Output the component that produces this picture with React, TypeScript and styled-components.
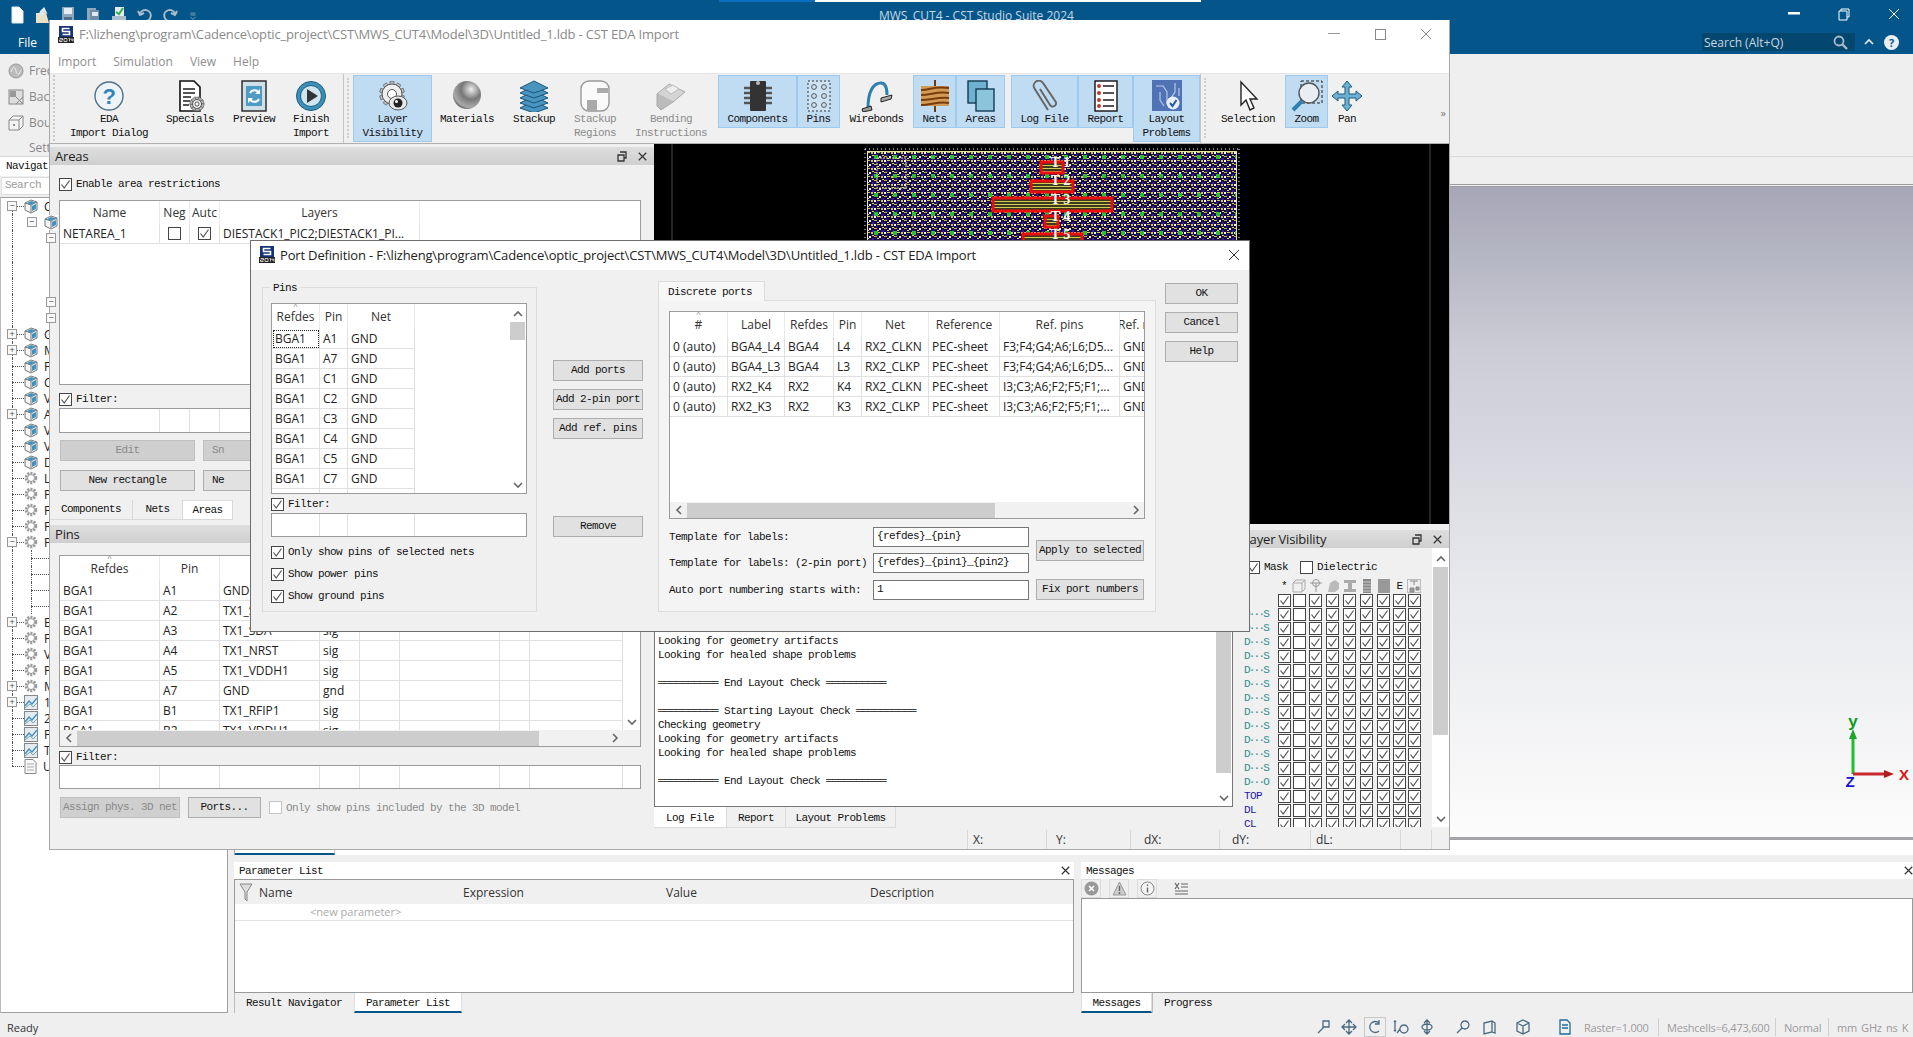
import React from 'react';
import styled, { createGlobalStyle, css } from 'styled-components';

const GlobalStyle = createGlobalStyle`
  html, body { margin: 0; padding: 0; width: 1913px; height: 1037px; overflow: hidden; background: #f0eff0; }
  * { box-sizing: border-box; }
`;

const UI = `"Open Sans", "Noto Sans", sans-serif`;
const mono = css`
  font-family: "Liberation Mono", monospace;
  font-size: 11px;
  letter-spacing: -0.6px;
  white-space: pre;
`;

/* ---------- frame ---------- */
const Desktop = styled.div`
  position: relative;
  width: 1913px;
  height: 1037px;
  overflow: hidden;
  display: flex;
  flex-direction: column;
  background: #f0eff0;
  font-family: ${UI};
  font-size: 12px;
  color: #222;
`;
const AppTitle = styled.header`
  height: 54px;
  flex: none;
  background: #04568a;
  display: flex;
  flex-direction: column;
  color: #fff;
`;
const ShareBar = styled.div`
  position: absolute;
  left: 719px;
  top: 0;
  width: 482px;
  height: 2px;
  background: linear-gradient(90deg, #0a6fc2 0 96px, #fff 96px);
`;
const QuickRow = styled.div`
  height: 30px;
  display: flex;
  align-items: flex-start;
`;
const QuickIcons = styled.div`
  width: 879px;
  padding: 6px 0 0 9px;
  display: flex;
  gap: 9.5px;
`;
const AppName = styled.div`
  font-size: 12px;
  line-height: 16px;
  margin-top: 8px;
  color: #c6d6e2;
  width: 206px;
  white-space: nowrap;
`;
const WinControls = styled.div`
  margin-left: auto;
  margin-right: -6px;
  display: flex;
`;
const WinControl = styled.div`
  width: 50px;
  height: 28px;
  display: flex;
  align-items: center;
  justify-content: center;
`;
const FileRow = styled.div`
  height: 24px;
  display: flex;
  align-items: center;
  padding-left: 18px;
`;
const FileLabel = styled.div`
  font-size: 12px;
  color: #fff;
`;
const SearchWrap = styled.div`
  margin-left: auto;
  width: 153px;
  height: 18px;
  margin-right: 6px;
  background: #03476f;
  display: flex;
  align-items: center;
  justify-content: space-between;
  padding: 0 7px 0 2px;
  color: #c8d6e0;
  font-size: 12px;
  white-space: nowrap;
`;
const HelpWrap = styled.div`
  width: 52px;
  display: flex;
  align-items: center;
  gap: 10px;
  padding-left: 3px;
`;
const HelpDot = styled.div`
  width: 15px;
  height: 15px;
  border-radius: 50%;
  background: #e8eef2;
  color: #04568a;
  font-weight: 700;
  font-size: 11px;
  line-height: 15px;
  text-align: center;
`;
const AppRibbon = styled.div`
  height: 103px;
  flex: none;
  border-bottom: 1px solid #d9d8d9;
  display: flex;
  flex-direction: column;
  padding: 8px 0 0 8px;
  gap: 9px;
  color: #888;
`;
const RibbonEntry = styled.div`
  height: 17px;
  display: flex;
  align-items: center;
  gap: 5px;
`;
const RibbonGroupLabel = styled.div`
  height: 16px;
  padding-left: 21px;
  line-height: 16px;
`;
const Workspace = styled.div`
  height: 856px;
  flex: none;
  display: flex;
`;
const NavPanel = styled.aside`
  width: 228px;
  flex: none;
  display: flex;
  flex-direction: column;
`;
const NavTab = styled.div`
  ${mono};
  height: 19px;
  background: #fff;
  padding: 2px 0 0 6px;
  line-height: 14px;
  color: #111;
`;
const NavSearch = styled.div`
  ${mono};
  height: 18px;
  margin: 1px 0 0 1px;
  background: #fff;
  border: 1px solid #ddd;
  color: #999;
  padding-left: 3px;
  line-height: 15px;
`;
const TreeBox = styled.div`
  flex: 1;
  margin-top: 2px;
  padding-top: 0;
  background: #fff;
  border: 1px solid #a0a0a0;
  border-left: 1px solid #bbb;
  overflow: hidden;
`;
const TreeRow = styled.div<{ $guide: 'full' | 'first' | 'last'; $branch: boolean }>`
  position: relative;
  height: 16px;
  display: flex;
  align-items: center;
  padding-left: 6px;
  font-size: 12px;
  &::before {
    content: '';
    position: absolute;
    left: 11px;
    width: 0;
    border-left: 1px dotted #555;
    top: ${(p) => (p.$guide === 'first' ? '8px' : '0')};
    bottom: ${(p) => (p.$guide === 'last' ? '8px' : '0')};
  }
  &::after {
    content: '';
    position: absolute;
    display: ${(p) => (p.$branch ? 'block' : 'none')};
    left: 11px;
    width: 12px;
    top: 8px;
    border-top: 1px dotted #555;
  }
`;
const Expander = styled.span<{ $level: number }>`
  position: relative;
  z-index: 1;
  width: 10px;
  height: 10px;
  flex: none;
  margin-left: ${(p) => p.$level * 19.5}px;
  background: #f8f8f8;
  border: 1px solid #999;
  font-size: 9px;
  line-height: 8px;
  text-align: center;
  color: #444;
`;
const ExpanderGap = styled.span`
  width: 10px;
  flex: none;
`;
const TreeIcon = styled.span`
  position: relative;
  z-index: 1;
  margin-left: 7px;
  background: #fff;
  display: flex;
  flex: none;
`;
const TreeLabel = styled.span`
  margin-left: 6px;
`;
const SubBranch = styled.div`
  position: relative;
  height: 16px;
  &::before {
    content: '';
    position: absolute;
    left: 24px;
    top: 0;
    bottom: 0;
    border-left: 1px dotted #555;
  }
  &::after {
    content: '';
    position: absolute;
    left: 24px;
    top: 8px;
    width: 20px;
    border-top: 1px dotted #555;
  }
`;
const MainArea = styled.main`
  flex: 1;
  margin-left: 6px;
  display: flex;
  flex-direction: column;
`;
const SubBar = styled.div`
  height: 30px;
  flex: none;
  border-bottom: 3px double #9c9c9c;
`;
const Viewport = styled.div`
  position: relative;
  height: 653px;
  flex: none;
  background: linear-gradient(180deg, #a6a6b7 0%, #cbccd5 25%, #e7e8ec 60%, #fcfcfc 100%);
  border-bottom: 3px double #a0a0a0;
`;
const AxisArt = styled.svg<{ $left: number; $top: number }>`
  position: absolute;
  left: ${(p) => p.$left}px;
  top: ${(p) => p.$top}px;
`;
const TabStrip = styled.div`
  height: 15px;
  flex: none;
  background: #fff;
  border-left: 1px solid #aaa;
`;
const StripTab = styled.div`
  width: 100px;
  height: 15px;
  background: #fff;
  border-right: 1px solid #ccc;
  border-bottom: 2px solid #04568a;
`;
const Docks = styled.div`
  margin-top: 7px;
  height: 151px;
  flex: none;
  display: flex;
  gap: 7px;
`;
const Dock = styled.section<{ $w?: number }>`
  width: ${(p) => (p.$w ? `${p.$w}px` : 'auto')};
  flex: ${(p) => (p.$w ? 'none' : '1')};
  display: flex;
  flex-direction: column;
`;
const DockTitle = styled.div<{ $edge?: boolean }>`
  ${mono};
  height: 17px;
  background: #fff;
  display: flex;
  align-items: center;
  justify-content: space-between;
  padding: 0 ${(p) => (p.$edge ? 0 : 4)}px 0 5px;
  color: #111;
`;
const DockBox = styled.div`
  flex: 1;
  background: #fff;
  border: 1px solid #999;
`;
const ParamHead = styled.div`
  height: 24px;
  background: #f1f0f1;
  display: grid;
  grid-template-columns: 24px 204px 203px 204px 1fr;
  align-items: center;
  font-size: 12px;
  color: #333;
`;
const FilterSlot = styled.div`
  display: flex;
  padding-left: 4px;
`;
const ParamNew = styled.div`
  height: 17px;
  border-bottom: 1px solid #e2e2e2;
  padding-left: 75px;
  font-size: 11px;
  line-height: 16px;
  color: #aaa;
`;
const MsgTools = styled.div`
  height: 19px;
  display: flex;
  align-items: center;
  background: #f0eff0;
  padding-left: 0;
  gap: 8px;
`;
const MsgTool = styled.div`
  width: 20px;
  height: 19px;
  display: flex;
  align-items: center;
  justify-content: center;
  border: 1px solid #ddd;
`;
const MsgToolPlain = styled(MsgTool)`
  border: none;
  margin-left: 6px;
`;
const DockTabs = styled.div`
  height: 20px;
  flex: none;
  display: flex;
`;
const DockTab = styled.div<{ $w: number; $active?: boolean }>`
  ${mono};
  width: ${(p) => p.$w}px;
  text-align: center;
  line-height: 21px;
  color: #111;
  background: ${(p) => (p.$active ? '#fff' : 'transparent')};
  border-bottom: ${(p) => (p.$active ? '2px solid #04568a' : 'none')};
  border-left: 1px solid ${(p) => (p.$active ? '#ddd' : '#bbb')};
  border-right: 1px solid ${(p) => (p.$active ? '#ddd' : 'transparent')};
`;
const StatusBar = styled.footer`
  height: 24px;
  flex: none;
  display: flex;
  align-items: center;
  padding: 4px 3px 0 7px;
  color: #333;
  font-size: 11px;
`;
const StatusTools = styled.div`
  margin-left: auto;
  display: flex;
  align-items: center;
  gap: 4px;
`;
const StatusIcon = styled.div<{ $boxed?: boolean; $gap?: number }>`
  width: 22px;
  height: 20px;
  display: flex;
  align-items: center;
  justify-content: center;
  margin-left: ${(p) => p.$gap ?? 0}px;
  border: 1px solid ${(p) => (p.$boxed ? '#c8c8c8' : 'transparent')};
`;
const StatusText = styled.div<{ $w: number }>`
  width: ${(p) => p.$w}px;
  margin-left: 8px;
  color: #9a9a9a;
  white-space: nowrap;
  letter-spacing: -0.2px;
  word-spacing: 1.5px;
`;
const StatusSep = styled.div`
  width: 1px;
  height: 18px;
  background: #d0d0d0;
  margin-left: 8px;
`;

/* ---------- EDA window ---------- */
const EdaWindow = styled.div`
  position: absolute;
  left: 49px;
  top: 20px;
  width: 1401px;
  height: 830px;
  background: #f0f0f0;
  border: 1px solid #a8a8a8;
  border-top: none;
  display: flex;
  flex-direction: column;
`;
const WinTitle = styled.div`
  height: 30px;
  flex: none;
  background: #fff;
  display: flex;
  align-items: center;
  padding: 0 0 2px 8px;
  gap: 5px;
`;
const WinTitleText = styled.div<{ $dark?: boolean }>`
  color: ${(p) => (p.$dark ? '#222' : '#8a8a8a')};
  font-size: 13px;
  white-space: nowrap;
  letter-spacing: -0.17px;
`;
const EdaControls = styled.div`
  margin-left: auto;
  display: flex;
`;
const EdaControl = styled.div<{ $w?: number }>`
  width: ${(p) => p.$w ?? 46}px;
  height: 28px;
  display: flex;
  align-items: center;
  justify-content: center;
`;
const MenuBar = styled.div`
  height: 23px;
  flex: none;
  background: #fff;
  display: flex;
  gap: 17px;
  padding: 3px 0 0 8px;
  color: #8e8e8e;
  align-items: flex-start;
  line-height: 18px;
`;
const Toolbar = styled.div`
  height: 71px;
  flex: none;
  background: #f0f0f0;
  border-top: 1px solid #e6e6e6;
  border-bottom: 1px solid #b0b0b0;
  display: flex;
  align-items: flex-start;
  padding: 1px 0 0 3px;
`;
const Grip = styled.div<{ $w: number }>`
  width: ${(p) => p.$w}px;
  flex: none;
  height: 66px;
  border-left: 2px dotted #c8c8c8;
`;
const ToolSep = styled.div<{ $w: number }>`
  width: ${(p) => p.$w}px;
  height: 69px;
  margin-top: -1px;
  flex: none;
  border-left: 1px solid #c4c4c4;
  padding-left: 3px;
  &::before {
    content: '';
    display: block;
    height: 60px;
    margin-top: 4px;
    border-left: 2px dotted #cfcfcf;
  }
`;
const Tool = styled.div<{ $w: number; $active?: boolean; $off?: boolean }>`
  ${mono};
  width: ${(p) => p.$w}px;
  flex: none;
  padding-top: 3px;
  border: 1px solid ${(p) => (p.$active ? '#9ccbef' : 'transparent')};
  background: ${(p) => (p.$active ? '#c0dcf3' : 'transparent')};
  color: ${(p) => (p.$off ? '#8c8c8c' : '#111')};
  display: flex;
  flex-direction: column;
  align-items: center;
  line-height: 14px;
  padding-bottom: 1px;
`;
const ToolIcon = styled.div`
  height: 33px;
  display: flex;
  align-items: center;
  justify-content: center;
`;
const ToolGap = styled.div<{ $w: number }>`
  width: ${(p) => p.$w}px;
  flex: none;
`;
const ToolMore = styled.div`
  margin: 30px 0 0 auto;
  padding-right: 3px;
  font-size: 11px;
  color: #777;
`;
const EdaBody = styled.div`
  height: 686px;
  flex: none;
  display: flex;
`;
const LeftCol = styled.div`
  width: 604px;
  flex: none;
  display: flex;
  flex-direction: column;
`;
const PanelTitle = styled.div<{ $mt: number }>`
  height: 18px;
  flex: none;
  margin-top: ${(p) => p.$mt}px;
  padding: 0 7px 0 5px;
  background: linear-gradient(180deg, #dedede, #cfcfcf);
  display: flex;
  align-items: center;
  justify-content: space-between;
  color: #222;
  font-size: 13px;
  letter-spacing: -0.17px;
`;
const PanelIcons = styled.div`
  display: flex;
  gap: 11px;
  align-items: center;
`;
const PanelBody = styled.div`
  padding: 0 13px 0 9px;
  display: flex;
  flex-direction: column;
`;
const CheckRow = styled.label<{ $mt?: number }>`
  ${mono};
  height: 14px;
  flex: none;
  display: flex;
  align-items: center;
  gap: 4px;
  margin-top: ${(p) => p.$mt ?? 0}px;
  color: #111;
  line-height: 14px;
`;
const CheckRowMuted = styled(CheckRow)`
  color: #8a8a8a;
`;
const CheckBox = styled.span<{ $off?: boolean }>`
  width: 13px;
  height: 13px;
  flex: none;
  border: 1px solid ${(p) => (p.$off ? '#c4c4c4' : '#444')};
  background: #fff;
  display: inline-flex;
  align-items: center;
  justify-content: center;
`;
const Frame = styled.div<{ $h: number; $mt?: number }>`
  height: ${(p) => p.$h}px;
  margin-top: ${(p) => p.$mt ?? 0}px;
  flex: none;
  background: #fff;
  border: 1px solid #9c9c9c;
  display: flex;
  flex-direction: column;
  overflow: hidden;
`;
const FrameMain = styled.div`
  flex: 1;
  min-height: 0;
  display: flex;
  overflow: hidden;
`;
const Sheet = styled.div<{ $cols: string; $head: number }>`
  display: grid;
  grid-template-columns: ${(p) => p.$cols};
  grid-template-rows: ${(p) => p.$head}px;
  grid-auto-rows: 20px;
  flex: 1;
  min-width: 0;
  align-content: start;
  overflow: hidden;
`;
const HeadCell = styled.div`
  position: relative;
  display: flex;
  align-items: center;
  justify-content: center;
  border-right: 1px solid #eaeaea;
  color: #333;
  overflow: hidden;
  white-space: nowrap;
`;
const SortMark = styled.span`
  position: absolute;
  top: -2px;
  left: 0;
  right: 0;
  text-align: center;
  font-size: 8px;
  line-height: 8px;
  color: #888;
`;
const Cell = styled.div<{ $focus?: boolean }>`
  padding: 0 3px;
  line-height: 19px;
  border-right: 1px solid #e0e0e0;
  border-bottom: 1px solid #e0e0e0;
  overflow: hidden;
  white-space: nowrap;
  color: #222;
  outline: ${(p) => (p.$focus ? '1px dotted #222' : 'none')};
  outline-offset: -2px;
`;
const CheckCell = styled(Cell)`
  display: flex;
  align-items: center;
  justify-content: center;
`;
const VScroll = styled.div`
  width: 17px;
  flex: none;
  background: #fff;
  display: flex;
  flex-direction: column;
  align-items: center;
`;
const ScrollEnd = styled.div<{ $mt?: number }>`
  height: 16px;
  width: 100%;
  flex: none;
  margin-top: ${(p) => p.$mt ?? 0}px;
  display: flex;
  align-items: center;
  justify-content: center;
`;
const ScrollEndBottom = styled(ScrollEnd)`
  margin-top: auto;
`;
const VThumb = styled.div<{ $h: number }>`
  width: 15px;
  height: ${(p) => p.$h}px;
  flex: none;
  background: #cdcdcd;
`;
const HScroll = styled.div`
  height: 16px;
  flex: none;
  background: #f1f1f1;
  display: flex;
  align-items: center;
`;
const HEnd = styled.div`
  width: 17px;
  height: 16px;
  flex: none;
  display: flex;
  align-items: center;
  justify-content: center;
`;
const HEndRight = styled(HEnd)<{ $inset?: number }>`
  margin-left: auto;
  margin-right: ${(p) => p.$inset ?? 0}px;
`;
const HThumb = styled.div<{ $w: number }>`
  width: ${(p) => p.$w}px;
  height: 15px;
  flex: none;
  background: #cdcdcd;
`;
const FilterInput = styled.div<{ $cols: string; $h: number; $mt: number }>`
  height: ${(p) => p.$h}px;
  margin-top: ${(p) => p.$mt}px;
  flex: none;
  display: grid;
  grid-template-columns: ${(p) => p.$cols};
  background: #fff;
  border: 1px solid #9a9a9a;
`;
const FilterCol = styled.div`
  border-right: 1px solid #e0e0e0;
`;
const BtnRow = styled.div<{ $mt: number }>`
  display: flex;
  gap: 8px;
  margin-top: ${(p) => p.$mt}px;
  padding-left: 1px;
  align-items: center;
`;
const Btn = styled.div<{ $w?: number; $off?: boolean; $left?: boolean }>`
  ${mono};
  width: ${(p) => (p.$w ? `${p.$w}px` : '100%')};
  height: 21px;
  flex: none;
  line-height: 19px;
  text-align: ${(p) => (p.$left ? 'left' : 'center')};
  padding-left: ${(p) => (p.$left ? '8px' : '0')};
  background: ${(p) => (p.$off ? '#cfcfcf' : '#e1e1e1')};
  color: ${(p) => (p.$off ? '#8a8a8a' : '#111')};
  border: 1px solid ${(p) => (p.$off ? '#bfbfbf' : '#adadad')};
  overflow: hidden;
`;
const PanelTabs = styled.div`
  margin: 9px 0 0 -9px;
  height: 20px;
  display: flex;
`;
const PanelTab = styled.div<{ $w: number; $active?: boolean }>`
  ${mono};
  width: ${(p) => p.$w}px;
  text-align: center;
  line-height: 19px;
  color: #111;
  background: ${(p) => (p.$active ? '#fff' : '#f0f0f0')};
  border-top: ${(p) => (p.$active ? '1px solid #ddd' : 'none')};
  border-right: 1px solid #d8d8d8;
  border-bottom: 1px solid #d8d8d8;
`;
const RightCol = styled.div`
  flex: 1;
  display: flex;
  flex-direction: column;
`;
const Canvas = styled.div`
  height: 380px;
  flex: none;
  background: #000;
  overflow: hidden;
`;
const LowerRow = styled.div`
  margin-top: 5px;
  height: 301px;
  flex: none;
  display: flex;
`;
const LogCol = styled.div`
  width: 579px;
  flex: none;
  display: flex;
  flex-direction: column;
`;
const LogBox = styled.div`
  height: 278px;
  flex: none;
  background: #fff;
  border: 1px solid #777;
  display: flex;
`;
const LogText = styled.div`
  flex: 1;
  display: flex;
  flex-direction: column;
  justify-content: flex-end;
  padding: 0 0 18px 3px;
`;
const LogLine = styled.div`
  ${mono};
  height: 14px;
  line-height: 14px;
  color: #111;
`;
const LogThumbSpace = styled.div`
  height: 100px;
  flex: none;
`;
const LogTabs = styled.div`
  height: 21px;
  display: flex;
`;
const LogTab = styled.div<{ $w: number; $active?: boolean }>`
  ${mono};
  width: ${(p) => p.$w}px;
  text-align: center;
  line-height: 22px;
  color: #111;
  background: ${(p) => (p.$active ? '#fff' : 'transparent')};
  border-right: 1px solid #dcdcdc;
  border-bottom: 1px solid #dcdcdc;
`;
const LayerPanel = styled.div`
  flex: 1;
  margin-left: 5px;
  padding-top: 1px;
  display: flex;
  flex-direction: column;
  min-width: 0;
`;
const LayerMain = styled.div`
  height: 279px;
  flex: none;
  display: flex;
  overflow: hidden;
`;
const LayerContent = styled.div`
  flex: 1;
  padding: 12px 0 0 6px;
  overflow: hidden;
`;
const MaskRow = styled.div`
  ${mono};
  height: 14px;
  padding-left: 3px;
  display: flex;
  align-items: center;
  gap: 4px;
  color: #111;
`;
const MaskSecond = styled.span`
  width: 4px;
`;
const LayerGrid = styled.div`
  margin-top: 5px;
  display: grid;
  grid-template-columns: 33px 14px 16px 17px 17px 17px 17px 17px 15px 14px;
  grid-auto-rows: 14px;
  justify-items: center;
  align-items: center;
`;
const LayerLabel = styled.div<{ $color: string; $wide?: boolean }>`
  ${mono};
  justify-self: start;
  color: ${(p) => p.$color};
  line-height: 14px;
  letter-spacing: ${(p) => (p.$wide ? '-1.8px' : '-0.6px')};
`;
const LayerHead = styled.div`
  ${mono};
  display: flex;
  align-items: center;
  justify-content: center;
  width: 100%;
  height: 14px;
  color: #111;
`;
const CoordBar = styled.div`
  height: 19px;
  flex: none;
  display: flex;
  justify-content: flex-end;
  align-items: stretch;
  font-size: 12px;
  color: #333;
`;
const CoordCell = styled.div<{ $w: number; $pad: number }>`
  width: ${(p) => p.$w}px;
  padding-left: ${(p) => p.$pad}px;
  border-left: 1px solid #d8d8d8;
  line-height: 19px;
`;

/* ---------- dialog ---------- */
const Dialog = styled.div`
  position: absolute;
  left: 250px;
  top: 240px;
  width: 1000px;
  height: 392px;
  background: #f0f0f0;
  border: 1px solid #6e6e6e;
  display: flex;
  flex-direction: column;
`;
const DialogTitle = styled.div`
  height: 29px;
  flex: none;
  background: #fff;
  display: flex;
  align-items: center;
  padding: 0 0 2px 8px;
  gap: 5px;
`;
const DialogBody = styled.div`
  flex: 1;
  display: flex;
  align-items: flex-start;
  padding: 11px 0 0 11px;
`;
const GroupBox = styled.fieldset`
  position: relative;
  margin: 6px 0 0;
  padding: 15px 9px 0 8px;
  width: 275px;
  height: 325px;
  border: 1px solid #dcdcdc;
  display: flex;
  flex-direction: column;
  min-inline-size: 0;
`;
const GroupLegend = styled.div`
  ${mono};
  position: absolute;
  left: 7px;
  top: -7px;
  padding: 0 3px;
  background: #f0f0f0;
  line-height: 14px;
  color: #111;
`;
const MiddleCol = styled.div`
  width: 90px;
  margin: 79px 0 0 16px;
  flex: none;
  display: flex;
  flex-direction: column;
  gap: 8px;
`;
const RemoveSlot = styled.div`
  margin-top: 69px;
`;
const TabCol = styled.div`
  width: 498px;
  margin-left: 15px;
  flex: none;
`;
const PageTab = styled.div`
  ${mono};
  width: 107px;
  height: 20px;
  background: #f7f7f7;
  border: 1px solid #dcdcdc;
  border-bottom: none;
  padding: 3px 0 0 9px;
  line-height: 14px;
  color: #111;
  margin-bottom: -1px;
  position: relative;
`;
const TabPage = styled.div`
  height: 312px;
  background: #f4f4f4;
  border: 1px solid #dcdcdc;
  padding: 10px 10px 0 10px;
`;
const FormGrid = styled.div`
  margin-top: 8px;
  display: grid;
  grid-template-columns: 197px 156px 108px;
  column-gap: 7px;
  grid-template-rows: 20px 20px 21px;
  row-gap: 6px;
`;
const FormLabel = styled.div`
  ${mono};
  line-height: 20px;
  color: #111;
`;
const FormLabelLast = styled(FormLabel)`
  align-self: end;
`;
const FormInput = styled.div`
  ${mono};
  height: 20px;
  background: #fff;
  border: 1px solid #777;
  padding-left: 3px;
  line-height: 17px;
  color: #111;
`;
const FormInputLast = styled(FormInput)`
  align-self: end;
`;
const ApplyCell = styled.div`
  grid-column: 3;
  grid-row: 1 / span 2;
  align-self: center;
`;
const ActionCol = styled.div`
  width: 73px;
  margin: 2px 0 0 9px;
  flex: none;
  display: flex;
  flex-direction: column;
  gap: 8px;
`;

/* ---------- icons ---------- */
const X = ({ s = 12, c = '#555', w = 1 }: { s?: number; c?: string; w?: number }) => (
  <svg width={s} height={s} viewBox="0 0 12 12">
    <path d="M1 1L11 11M11 1L1 11" stroke={c} strokeWidth={w} />
  </svg>
);
const Float = () => (
  <svg width="10" height="11" viewBox="0 0 10 11">
    <path d="M3 1H9V7H7M1 4H7V10H1Z" fill="none" stroke="#333" strokeWidth="1.3" />
  </svg>
);
const Tick = ({ c = '#555' }: { c?: string }) => (
  <svg width="11" height="11" viewBox="0 0 11 11">
    <path d="M1.5 5.5L4.2 9L9.5 1.5" fill="none" stroke={c} strokeWidth="1.2" />
  </svg>
);
const Box = ({ on = true, off = false }: { on?: boolean; off?: boolean }) => (
  <CheckBox $off={off}>{on && <Tick />}</CheckBox>
);
const Chev = ({ d, c = '#666' }: { d: 'u' | 'd' | 'l' | 'r'; c?: string }) => {
  const p = { u: 'M1 7L5 3L9 7', d: 'M1 3L5 7L9 3', l: 'M7 1L3 5L7 9', r: 'M3 1L7 5L3 9' }[d];
  return (
    <svg width="10" height="10" viewBox="0 0 10 10">
      <path d={p} fill="none" stroke={c} strokeWidth="1.6" />
    </svg>
  );
};
const CstLogo = () => (
  <svg width="16" height="17" viewBox="0 0 16 17">
    <rect x="1" y="0" width="14" height="11" fill="#16337a" />
    <path d="M11.5 2.5H4.5V5.5H11.5V8.5H4.5" fill="none" stroke="#fff" strokeWidth="1.6" />
    <rect x="0" y="11" width="16" height="6" fill="#222" />
    <path d="M1.5 12.5h3v1.5h-3v1.5h3M6 12.5h3v3h-3zM10.5 12.5h1v3M13 12.5v1.5h2M15 12.5v3" fill="none" stroke="#eee" strokeWidth=".8" />
  </svg>
);
const Q = (kids: React.ReactNode, w = 16, h = 18) => (
  <svg width={w} height={h} viewBox="0 0 16 18">
    {kids}
  </svg>
);
const quickIcons = [
  Q(<path d="M3 1H10L14 5V17H3Z" fill="#fff" stroke="#dfe7ee" />),
  Q(<><path d="M1 7H11L14 17H1Z" fill="#e9e2c8" /><path d="M7 1L13 6L9 6V10H5V6Z" fill="#dfe9f2" transform="rotate(25 8 6)" /></>),
  Q(<><rect x="2" y="1" width="12" height="16" fill="#8fa8bb" /><rect x="4" y="2" width="8" height="6" fill="#e6edf2" /><rect x="4" y="11" width="8" height="6" fill="#516f85" /></>),
  Q(<><rect x="1" y="2" width="9" height="12" fill="#8fa8bb" /><rect x="4" y="4" width="9" height="13" fill="#6f8ea6" /><rect x="6" y="6" width="6" height="4" fill="#dfe8ef" /></>),
  Q(<><rect x="4" y="1" width="9" height="9" fill="#e6edf2" /><path d="M5 6L8 8L12 2" stroke="#37b349" fill="none" strokeWidth="2" /><rect x="1" y="10" width="14" height="6" fill="#a9bdcc" /></>),
  Q(<path d="M3 8A5.5 5.5 0 1 1 8 15M1 5L3 9L7 7" fill="none" stroke="#a8bccb" strokeWidth="2" />),
  Q(<path d="M13 8A5.5 5.5 0 1 0 8 15M15 5L13 9L9 7" fill="none" stroke="#a8bccb" strokeWidth="2" />),
  Q(<path d="M4 9H12M4 12L8 16L12 12M4 6H12" stroke="#7f9eb3" fill="none" strokeWidth="1.5" />, 10),
];
const Svg32 = styled.svg`
  display: block;
`;
const I = (kids: React.ReactNode, off?: boolean) => (
  <Svg32 width="32" height="32" viewBox="0 0 32 32" opacity={off ? 0.55 : 1}>
    {kids}
  </Svg32>
);
const gearPath = (cx: number, cy: number, r: number, stroke = '#666', fill = '#eee') => {
  const teeth = Array.from({ length: 10 }, (_, i) => {
    const a = (i * Math.PI) / 5;
    return (
      <rect
        key={i}
        x={cx - 2}
        y={cy - r - 2.4}
        width="4"
        height="4"
        fill="#bbb"
        stroke={stroke}
        strokeWidth=".6"
        transform={`rotate(${(a * 180) / Math.PI} ${cx} ${cy})`}
      />
    );
  });
  return (
    <g>
      {teeth}
      <circle cx={cx} cy={cy} r={r} fill={fill} stroke={stroke} />
      <circle cx={cx} cy={cy} r={r * 0.45} fill="#fff" stroke={stroke} />
    </g>
  );
};
const toolIcons: Record<string, React.ReactNode> = {
  help: I(
    <>
      <circle cx="16" cy="16" r="14" fill="#eef3f8" stroke="#4f7087" strokeWidth="1.4" />
      <text x="16" y="24" textAnchor="middle" fontFamily="Liberation Sans" fontWeight="700" fontSize="22" fill="#2f82bb">?</text>
    </>
  ),
  specials: I(
    <>
      <path d="M6 1H20L26 7V31H6Z" fill="#fff" stroke="#111" strokeWidth="1.6" />
      <path d="M9 9H21M9 13H21M9 17H17M9 21H16M9 25H15" stroke="#555" strokeWidth="2" />
      {gearPath(23, 24, 4.5, '#555')}
    </>
  ),
  preview: I(
    <>
      <rect x="4" y="1" width="24" height="30" fill="#cfe0ea" stroke="#222" strokeWidth="1.4" />
      <rect x="8" y="6" width="16" height="20" fill="#4f9bc4" />
      <path d="M12 13A5 5 0 0 1 21 13M21 19A5 5 0 0 1 12 19" fill="none" stroke="#fff" strokeWidth="2" />
      <path d="M22 9V14H17M10 23V18H15" fill="#fff" />
    </>
  ),
  finish: I(
    <>
      <circle cx="16" cy="16" r="14.5" fill="#3c8fb8" stroke="#1c5c80" />
      <circle cx="16" cy="16" r="10.5" fill="#cfe5f0" stroke="#1c5c80" />
      <path d="M12 9L23 16L12 23Z" fill="#333" />
    </>
  ),
  layer: I(
    <>
      {gearPath(15, 14, 10, '#555')}
      <ellipse cx="21" cy="23" rx="9" ry="7" fill="#e8e8e8" stroke="#555" />
      <circle cx="21" cy="23" r="4.5" fill="#222" />
      <circle cx="19.5" cy="21.5" r="1.5" fill="#fff" />
    </>
  ),
  materials: I(
    <>
      <defs>
        <radialGradient id="mat" cx=".65" cy=".3" r=".8">
          <stop offset="0" stopColor="#eee" />
          <stop offset=".45" stopColor="#777" />
          <stop offset=".8" stopColor="#aaa" />
          <stop offset="1" stopColor="#444" />
        </radialGradient>
      </defs>
      <circle cx="16" cy="15" r="14" fill="url(#mat)" />
    </>
  ),
  stackup: I(
    <>
      {[20, 15, 10, 5, 0].map((y) => (
        <path key={y} d={`M16 ${y + 1}L30 ${y + 8}L16 ${y + 13}L2 ${y + 8}Z`} fill="#4a94c0" stroke="#18567c" />
      ))}
    </>
  ),
  regions: I(
    <>
      <rect x="2" y="1" width="28" height="30" rx="8" fill="#fafafa" stroke="#999" strokeWidth="1.4" />
      <rect x="18" y="8" width="11" height="5" fill="#aaa" />
      <rect x="8" y="20" width="10" height="11" fill="#aaa" />
    </>
  ),
  bending: I(
    <>
      <path d="M2 14L14 4L30 12L18 22Z" fill="#d4d4d4" stroke="#aaa" />
      <path d="M2 14V26L6 30L18 22" fill="#bbb" stroke="#aaa" />
      <path d="M10 9L18 5L24 9L16 14Z" fill="#eee" stroke="#bbb" />
    </>
  ),
  components: I(
    <>
      <path d="M2 8H30M2 13H30M2 18H30M2 23H30" stroke="#555" strokeWidth="2.6" />
      <rect x="8" y="1" width="16" height="30" rx="1" fill="#333" />
      <circle cx="16" cy="3" r="2" fill="#bbb" />
    </>
  ),
  pins: I(
    <>
      <rect x="5" y="1" width="22" height="30" fill="#fff" fillOpacity=".2" stroke="#333" strokeDasharray="2 2" />
      {[7, 16, 25].map((y) => [11, 21].map((x) => <circle key={`${x}${y}`} cx={x} cy={y} r="2.4" fill="none" stroke="#555" />))}
    </>
  ),
  wirebonds: I(
    <>
      <path d="M7 28C7 12 12 3 20 3C24 3 26 8 26 15" fill="none" stroke="#2f7fb0" strokeWidth="3" />
      <path d="M1 29L10 26L11 30L2 32Z" fill="#999" stroke="#222" />
      <path d="M20 18L31 15L30 19L20 22Z" fill="#aaa" stroke="#222" />
    </>
  ),
  nets: I(
    <>
      <path d="M16 0V32" stroke="#6a3d10" strokeWidth="2" />
      <rect x="2" y="6" width="28" height="20" fill="#d19a55" />
      <path d="M2 10C12 10 14 6 30 8M2 15C12 15 18 11 30 13M2 20C12 20 18 17 30 18M2 25C12 25 20 21 30 23" stroke="#7a3b0c" strokeWidth="2" fill="none" />
    </>
  ),
  areas: I(
    <>
      <rect x="3" y="1" width="19" height="22" fill="#6fb2d0" stroke="#113a55" strokeWidth="1.4" />
      <rect x="11" y="9" width="18" height="22" fill="#8cc4dc" stroke="#113a55" strokeWidth="1.4" />
    </>
  ),
  log: I(
    <path d="M11 9L21 25A3.2 3.2 0 0 0 26.5 21.5L14 3A5 5 0 0 0 5.5 8.5L19 30" fill="none" stroke="#666" strokeWidth="2" />
  ),
  report: I(
    <>
      <rect x="5" y="1" width="22" height="30" fill="#fff" stroke="#111" strokeWidth="1.4" />
      {[6, 13, 20, 26].map((y) => (
        <g key={y}>
          <circle cx="9" cy={y} r="2" fill="#c0392b" />
          <path d={`M13 ${y}H24`} stroke="#555" strokeWidth="2" />
        </g>
      ))}
    </>
  ),
  problems: I(
    <>
      <rect x="1" y="0" width="30" height="31" fill="#4f73b5" />
      <path d="M5 6H12L16 12V24M24 3V12L20 18V28M9 12V20L13 26M28 8V16" stroke="#b8c9e6" fill="none" strokeWidth="1.2" />
      <circle cx="22" cy="23" r="6.5" fill="#e8f0fa" />
      <path d="M19 23L21.5 26L25.5 20" stroke="#2c5aa8" fill="none" strokeWidth="2" />
    </>
  ),
  selection: I(<path d="M9 2V25L14 20L18 30L22 28L18 19H25Z" fill="#fff" stroke="#222" strokeWidth="1.4" />),
  zoom: I(
    <>
      <rect x="10" y="1" width="21" height="22" fill="none" stroke="#222" strokeDasharray="3 2" />
      <path d="M11 21L2 30" stroke="#2f7fb0" strokeWidth="4" />
      <circle cx="18" cy="13" r="10" fill="#e8eef3" stroke="#555" strokeWidth="1.4" />
    </>
  ),
  pan: I(
    <>
      <path d="M16 1L21 7H18V14H25V11L31 16L25 21V18H18V25H21L16 31L11 25H14V18H7V21L1 16L7 11V14H14V7H11Z" fill="#6cb0d4" stroke="#1d5d82" />
    </>
  ),
};

type ToolDef = { k?: string; w: number; label?: string[]; active?: boolean; off?: boolean; sep?: boolean; gap?: boolean };
const tools: ToolDef[] = [
  { k: 'help', w: 84, label: ['EDA', 'Import Dialog'] },
  { k: 'specials', w: 78, label: ['Specials'] },
  { k: 'preview', w: 50, label: ['Preview'] },
  { k: 'finish', w: 64, label: ['Finish', 'Import'] },
  { sep: true, w: 10 },
  { k: 'layer', w: 79, label: ['Layer', 'Visibility'], active: true },
  { k: 'materials', w: 70, label: ['Materials'] },
  { k: 'stackup', w: 64, label: ['Stackup'] },
  { k: 'regions', w: 58, label: ['Stackup', 'Regions'], off: true },
  { k: 'bending', w: 94, label: ['Bending', 'Instructions'], off: true },
  { k: 'components', w: 79, label: ['Components'], active: true },
  { k: 'pins', w: 43, label: ['Pins'], active: true },
  { k: 'wirebonds', w: 73, label: ['Wirebonds'] },
  { k: 'nets', w: 43, label: ['Nets'], active: true },
  { k: 'areas', w: 49, label: ['Areas'], active: true },
  { gap: true, w: 6 },
  { k: 'log', w: 67, label: ['Log File'], active: true },
  { k: 'report', w: 55, label: ['Report'], active: true },
  { k: 'problems', w: 67, label: ['Layout', 'Problems'], active: true },
  { sep: true, w: 11 },
  { k: 'selection', w: 74, label: ['Selection'] },
  { k: 'zoom', w: 43, label: ['Zoom'], active: true },
  { k: 'pan', w: 38, label: ['Pan'] },
];

/* tree */
const Cube = () => (
  <svg width="14" height="15" viewBox="0 0 14 15">
    <path d="M1 4L7 1L13 3V11L7 14L1 11Z" fill="#f4f4f4" stroke="#777" />
    <path d="M1 4L7 6V13M7 6L13 3" fill="none" stroke="#777" />
    <path d="M2 4.5L7 2L12 3.5L7 5.5Z M8 7L12 5V10L8 12Z" fill="#3f93c2" />
  </svg>
);
const TreeGear = () => (
  <svg width="14" height="14" viewBox="0 0 14 14">
    <circle cx="7" cy="7" r="5" fill="#eee" stroke="#999" strokeWidth="2.6" strokeDasharray="2 1.2" />
    <circle cx="7" cy="7" r="3.5" fill="#fff" stroke="#999" />
  </svg>
);
const TreeChart = () => (
  <svg width="14" height="15" viewBox="0 0 14 15">
    <rect x=".5" y=".5" width="13" height="14" fill="#e4eaf0" stroke="#888" />
    <path d="M1 11L5 6L8 9L13 3" stroke="#3f93c2" fill="none" strokeWidth="1.4" />
    <path d="M1 13L6 9L9 12L13 8" stroke="#7aa" fill="none" />
  </svg>
);
const TreeDoc = () => (
  <svg width="13" height="15" viewBox="0 0 13 15">
    <path d="M1 .5H9L12 3.5V14.5H1Z" fill="#f8f8f8" stroke="#888" />
    <path d="M3 5H10M3 8H10M3 11H10" stroke="#aaa" />
  </svg>
);
type TreeDef = { lvl?: number; exp?: '+' | '-'; icon?: 'cube' | 'gear' | 'chart' | 'doc'; t?: string; branch?: boolean; sub?: boolean };
const tree: TreeDef[] = [
  { exp: '-', icon: 'cube', t: 'C', branch: true },
  { lvl: 1, exp: '-', icon: 'cube' },
  { lvl: 2, exp: '-' },
  {}, {}, {},
  { lvl: 2, exp: '-' },
  { lvl: 2, exp: '-' },
  { exp: '+', icon: 'cube', t: 'G', branch: true },
  { exp: '+', icon: 'cube', t: 'M', branch: true },
  { icon: 'cube', t: 'F', branch: true },
  { icon: 'cube', t: 'C', branch: true },
  { icon: 'cube', t: 'V', branch: true },
  { exp: '+', icon: 'cube', t: 'A', branch: true },
  { icon: 'cube', t: 'V', branch: true },
  { icon: 'cube', t: 'V', branch: true },
  { icon: 'cube', t: 'D', branch: true },
  { icon: 'gear', t: 'L', branch: true },
  { icon: 'gear', t: 'P', branch: true },
  { icon: 'gear', t: 'F', branch: true },
  { icon: 'gear', t: 'F', branch: true },
  { exp: '-', icon: 'gear', t: 'P', branch: true },
  { sub: true }, { sub: true }, { sub: true }, { sub: true },
  { exp: '+', icon: 'gear', t: 'E', branch: true },
  { icon: 'gear', t: 'F', branch: true },
  { icon: 'gear', t: 'V', branch: true },
  { icon: 'gear', t: 'P', branch: true },
  { exp: '+', icon: 'gear', t: 'M', branch: true },
  { exp: '+', icon: 'chart', t: '1', branch: true },
  { icon: 'chart', t: '2', branch: true },
  { icon: 'chart', t: 'F', branch: true },
  { icon: 'chart', t: 'T', branch: true },
  { icon: 'doc', t: 'U', branch: true },
];
const treeIcon = { cube: <Cube />, gear: <TreeGear />, chart: <TreeChart />, doc: <TreeDoc /> };

/* data */
const mainPinCols = '100px 60px 100px 40px 40px 100px 30px 93px';
const mainPins = [
  ['BGA1', 'A1', 'GND', 'gnd'],
  ['BGA1', 'A2', 'TX1_SCL', 'sig'],
  ['BGA1', 'A3', 'TX1_SDA', 'sig'],
  ['BGA1', 'A4', 'TX1_NRST', 'sig'],
  ['BGA1', 'A5', 'TX1_VDDH1', 'sig'],
  ['BGA1', 'A7', 'GND', 'gnd'],
  ['BGA1', 'B1', 'TX1_RFIP1', 'sig'],
  ['BGA1', 'B2', 'TX1_VDDH1', 'sig'],
];
const dlgPinCols = '48px 28px 67px';
const dlgPins = ['A1', 'A7', 'C1', 'C2', 'C3', 'C4', 'C5', 'C7', 'D1'];
const portCols = '58px 57px 49px 28px 67px 71px 120px 40px';
const portHead = ['#', 'Label', 'Refdes', 'Pin', 'Net', 'Reference', 'Ref. pins', 'Ref. net'];
const ports = [
  ['0 (auto)', 'BGA4_L4', 'BGA4', 'L4', 'RX2_CLKN', 'PEC-sheet', 'F3;F4;G4;A6;L6;D5...', 'GND'],
  ['0 (auto)', 'BGA4_L3', 'BGA4', 'L3', 'RX2_CLKP', 'PEC-sheet', 'F3;F4;G4;A6;L6;D5...', 'GND'],
  ['0 (auto)', 'RX2_K4', 'RX2', 'K4', 'RX2_CLKN', 'PEC-sheet', 'I3;C3;A6;F2;F5;F1;...', 'GND'],
  ['0 (auto)', 'RX2_K3', 'RX2', 'K3', 'RX2_CLKP', 'PEC-sheet', 'I3;C3;A6;F2;F5;F1;...', 'GND'],
];
const bars = '══════════';
const logLines = [
  'Checking geometry',
  'Looking for geometry artifacts',
  'Looking for healed shape problems',
  ' ',
  `${bars} End Layout Check ${bars}`,
  ' ',
  `${bars} Starting Layout Check ${bars}`,
  'Checking geometry',
  'Looking for geometry artifacts',
  'Looking for healed shape problems',
  ' ',
  `${bars} End Layout Check ${bars}`,
];
const layerRows: [string, string, boolean][] = [
  ['‹', '#222', false],
  ...Array.from({ length: 12 }, () => ['D···S', '#2a8f8c', true] as [string, string, boolean]),
  ['D···O', '#2a8f8c', true],
  ['TOP', '#1a1aa8', false],
  ['DL', '#1a1aa8', false],
  ['CL', '#1a1aa8', false],
];
const HeadIcon = ({ children }: { children: React.ReactNode }) => (
  <svg width="14" height="14" viewBox="0 0 14 14">
    {children}
  </svg>
);
const layerHeads = [
  <LayerHead key="a">*</LayerHead>,
  <HeadIcon key="b"><path d="M1 13V4L4 1H13V10L10 13ZM1 4H10V13M10 4L13 1" fill="none" stroke="#aaa" /></HeadIcon>,
  <HeadIcon key="c"><circle cx="7" cy="4" r="3.5" fill="none" stroke="#999" /><path d="M7 4V13M1 4H13" stroke="#999" /></HeadIcon>,
  <HeadIcon key="d"><path d="M2 13L4 4L9 1L13 4V10L9 13Z" fill="#bbb" /></HeadIcon>,
  <HeadIcon key="e"><path d="M1 1H13V4H9V10H13V13H1V10H5V4H1Z" fill="#aaa" /></HeadIcon>,
  <HeadIcon key="f"><rect x="3" y="0" width="8" height="14" fill="#888" /><path d="M3 3H11M3 6H11M3 9H11M3 12H11" stroke="#ccc" /></HeadIcon>,
  <HeadIcon key="g"><rect x="1" y="0" width="12" height="14" fill="#999" /></HeadIcon>,
  <LayerHead key="h">E</LayerHead>,
  <HeadIcon key="i"><rect x=".5" y=".5" width="13" height="13" fill="#eee" stroke="#bbb" /><path d="M3 2H11M7 2V6M3 9H7V13H3ZM9 8H12V11H9Z" stroke="#888" fill="#999" /></HeadIcon>,
];
const coords = [
  { t: 'X:', w: 79, pad: 5 },
  { t: 'Y:', w: 84, pad: 9 },
  { t: 'dX:', w: 89, pad: 13 },
  { t: 'dY:', w: 91, pad: 12 },
  { t: 'dL:', w: 90, pad: 5 },
  { t: '', w: 31, pad: 0 },
  { t: '', w: 18, pad: 0 },
];

/* PCB canvas */
const Pcb = () => (
  <svg width="795" height="380" viewBox="0 0 795 380">
    <defs>
      <pattern id="pcb" width="10" height="8" patternUnits="userSpaceOnUse">
        <rect width="10" height="8" fill="#160a48" />
        <rect x="0" y="0" width="2" height="2" fill="#f2f2f2" />
        <rect x="3" y="0" width="3" height="1" fill="#d4cc50" />
        <rect x="7" y="0" width="2" height="2" fill="#cfc752" />
        <rect x="2" y="2" width="2" height="2" fill="#2b1580" />
        <rect x="5" y="2" width="2" height="2" fill="#0c0c0c" />
        <rect x="5" y="4" width="2" height="2" fill="#eeeeee" />
        <rect x="0" y="4" width="3" height="1" fill="#c4bc40" />
        <rect x="8" y="3" width="2" height="1" fill="#e0d868" />
        <rect x="3" y="6" width="2" height="1" fill="#e6e06a" />
        <rect x="8" y="6" width="2" height="2" fill="#3a1a90" />
      </pattern>
      <pattern id="grn" x="4" y="0" width="19" height="19" patternUnits="userSpaceOnUse">
        <rect x="7" y="11" width="4" height="4" fill="#2cbf32" />
      </pattern>
      <pattern id="pad" width="4" height="3" patternUnits="userSpaceOnUse">
        <rect width="4" height="3" fill="#3a3a20" />
        <rect width="4" height="1" fill="#d4cc50" />
      </pattern>
    </defs>
    <path d="M18 0V380M776 0V380" stroke="#4a4a4a" />
    <rect x="213" y="7" width="370" height="120" fill="url(#pcb)" />
    <rect x="213" y="7" width="370" height="120" fill="url(#grn)" />
    <rect x="213.5" y="7.5" width="369" height="120" fill="none" stroke="#e8e4a0" />
    <path d="M211 5H585M211 5V130M585 5V130" fill="none" stroke="#fff" strokeDasharray="1 3" />
    <rect x="223" y="14" width="29" height="30" fill="none" stroke="#ddd9a0" strokeDasharray="2 1" />
    {[
      ['T1', 387, 18, 22, 11, 18],
      ['T2', 377, 37, 42, 11, 36],
      ['T3', 339, 54, 119, 13, 55],
      ['T4', 391, 72, 13, 11, 72],
      ['T5', 369, 90, 59, 20, 90],
    ].map(([t, x, y, w, h, ly]) => (
      <g key={t as string}>
        <rect x={x as number} y={y as number} width={w as number} height={h as number} fill="url(#pad)" stroke="#ee0b0b" strokeWidth="3" />
        <text x={408} y={(ly as number) + 5} textAnchor="middle" fontFamily="Liberation Serif" fontWeight="700" fontSize="14" letterSpacing="3" fill="#f4f4f4">{t as string}</text>
      </g>
    ))}
  </svg>
);

const Thin = ({ d, s = 16, c = '#557' }: { d: string; s?: number; c?: string }) => (
  <svg width={s} height={s} viewBox="0 0 16 16">
    <path d={d} fill="none" stroke={c} strokeWidth="1.3" />
  </svg>
);
const statusIcons: { d: string; gap: number; boxed?: boolean }[] = [
  { d: 'M8 2H14V8H8ZM9 8L3 14', gap: 0 },
  { d: 'M8 1V15M1 8H15M5 4L8 1L11 4M5 12L8 15L11 12M4 5L1 8L4 11M12 5L15 8L12 11', gap: 0 },
  { d: 'M12 4A5.5 5.5 0 1 0 12 12M12 1V5H8', gap: 0, boxed: true },
  { d: 'M2 2V12M1 3L2 2L3 3M1 11L2 12L3 11M11 6A4 4 0 1 1 10.9 6M7 10L4 14', gap: 0 },
  { d: 'M8 1V15M5 4L8 1L11 4M5 12L8 15L11 12M3 8A5 3 0 0 1 13 8A5 3 0 0 1 3 8', gap: 0 },
  { d: 'M10 2A4 4 0 1 1 9.9 2M7 9L2 14', gap: 10 },
  { d: 'M3 4L11 2V13L3 15ZM11 2L14 4V14L11 13', gap: 0 },
  { d: 'M8 1L14 4V12L8 15L2 12V4ZM2 4L8 7L14 4M8 7V15', gap: 8 },
  { d: 'M3 1H10L13 4V15H3ZM5 6H11M5 9H11', gap: 16 },
];

export default function App() {
  return (
    <Desktop>
      <GlobalStyle />
      <AppTitle>
        <QuickRow>
          <QuickIcons>
            {quickIcons.map((q, i) => (
              <span key={i}>{q}</span>
            ))}
          </QuickIcons>
          <AppName>MWS_CUT4 - CST Studio Suite 2024</AppName>
          <WinControls>
            <WinControl>
              <svg width="12" height="4"><rect width="12" height="2.5" fill="#fff" /></svg>
            </WinControl>
            <WinControl>
              <svg width="12" height="13" viewBox="0 0 12 13"><path d="M3 3V1H11V9H9M1 3H9V12H1Z" fill="none" stroke="#fff" /></svg>
            </WinControl>
            <WinControl>
              <X c="#fff" />
            </WinControl>
          </WinControls>
        </QuickRow>
        <FileRow>
          <FileLabel>File</FileLabel>
          <SearchWrap>
            Search (Alt+Q)
            <svg width="15" height="15" viewBox="0 0 15 15">
              <circle cx="6" cy="6" r="4.5" fill="none" stroke="#a8bccb" strokeWidth="1.8" />
              <path d="M9 9L14 14" stroke="#a8bccb" strokeWidth="2.4" />
            </svg>
          </SearchWrap>
          <HelpWrap>
            <Chev d="u" c="#e8eef2" />
            <HelpDot>?</HelpDot>
          </HelpWrap>
        </FileRow>
      </AppTitle>
      <ShareBar />
      <AppRibbon>
        <RibbonEntry>
          <svg width="16" height="16" viewBox="0 0 16 16">
            <circle cx="8" cy="8" r="7" fill="#bbb" stroke="#999" />
            <path d="M3 9C5 3 7 3 8 8C9 13 11 12 13 7" fill="none" stroke="#eee" />
          </svg>
          Freq
        </RibbonEntry>
        <RibbonEntry>
          <svg width="16" height="16" viewBox="0 0 16 16">
            <rect x="1" y="1" width="14" height="14" fill="#ddd" stroke="#888" />
            <rect x="2" y="2" width="6" height="6" fill="#999" />
            <path d="M8 8L15 15M15 8L8 15" stroke="#888" />
          </svg>
          Back
        </RibbonEntry>
        <RibbonEntry>
          <svg width="16" height="16" viewBox="0 0 16 16">
            <path d="M1 5L5 1H15V11L11 15H1ZM1 5H11V15M11 5L15 1" fill="#f4f4f4" stroke="#888" />
            <circle cx="6" cy="10" r="1" fill="#666" />
          </svg>
          Bou
        </RibbonEntry>
        <RibbonGroupLabel>Sett</RibbonGroupLabel>
      </AppRibbon>
      <Workspace>
        <NavPanel>
          <NavTab>Navigat</NavTab>
          <NavSearch>Search</NavSearch>
          <TreeBox>
            {tree.map((r, i) =>
              r.sub ? (
                <TreeRow key={i} $guide="full" $branch={false}>
                  <SubBranch />
                </TreeRow>
              ) : (
                <TreeRow key={i} $guide={i === 0 ? 'first' : i === tree.length - 1 ? 'last' : 'full'} $branch={!!r.branch}>
                  {r.exp ? <Expander $level={r.lvl ?? 0}>{r.exp === '-' ? '−' : '+'}</Expander> : <ExpanderGap />}
                  {r.icon && <TreeIcon>{treeIcon[r.icon]}</TreeIcon>}
                  {r.t && <TreeLabel>{r.t}</TreeLabel>}
                </TreeRow>
              )
            )}
          </TreeBox>
        </NavPanel>
        <MainArea>
          <SubBar />
          <Viewport>
            <AxisArt $left={1590} $top={520} width="70" height="90" viewBox="0 0 70 90">
              <path d="M29 28V67" stroke="#1fbf2e" strokeWidth="3" />
              <path d="M29 22L33 32H25Z" fill="#1fa52a" />
              <path d="M29 67H62" stroke="#c8292c" strokeWidth="3" />
              <path d="M70 67L60 63V71Z" fill="#b01c1c" />
              <text x="29" y="20" textAnchor="middle" fontFamily="Liberation Sans" fontWeight="700" fontSize="17" fill="#0c9a1c">y</text>
              <text x="26" y="80" textAnchor="middle" fontFamily="Liberation Sans" fontWeight="700" fontSize="15" fill="#1414c8">Z</text>
            </AxisArt>
            <AxisArt $left={1663} $top={578} width="14" height="20" viewBox="0 0 14 20">
              <text x="7" y="15" textAnchor="middle" fontFamily="Liberation Sans" fontWeight="700" fontSize="15" fill="#e01414">X</text>
            </AxisArt>
          </Viewport>
          <TabStrip>
            <StripTab />
          </TabStrip>
          <Docks>
            <Dock $w={840}>
              <DockTitle>
                Parameter List
                <X s={9} c="#333" w={1.6} />
              </DockTitle>
              <DockBox>
                <ParamHead>
                  <FilterSlot>
                    <svg width="14" height="20" viewBox="0 0 14 20">
                      <path d="M1 2H13L8 10V19L6 17V10Z" fill="#ddd" stroke="#888" />
                    </svg>
                  </FilterSlot>
                  <span>Name</span>
                  <span>Expression</span>
                  <span>Value</span>
                  <span>Description</span>
                </ParamHead>
                <ParamNew>&lt;new parameter&gt;</ParamNew>
              </DockBox>
              <DockTabs>
                <DockTab $w={120}>Result Navigator</DockTab>
                <DockTab $w={108} $active>Parameter List</DockTab>
              </DockTabs>
            </Dock>
            <Dock>
              <DockTitle $edge>
                Messages
                <X s={9} c="#333" w={1.6} />
              </DockTitle>
              <MsgTools>
                <MsgTool>
                  <svg width="15" height="15" viewBox="0 0 15 15">
                    <circle cx="7.5" cy="7.5" r="7" fill="#999" />
                    <path d="M5 5L10 10M10 5L5 10" stroke="#fff" strokeWidth="1.6" />
                  </svg>
                </MsgTool>
                <MsgTool>
                  <svg width="15" height="15" viewBox="0 0 15 15">
                    <path d="M7.5 1L14 14H1Z" fill="#ccc" stroke="#999" />
                    <path d="M7.5 5V10M7.5 11V13" stroke="#666" strokeWidth="1.4" />
                  </svg>
                </MsgTool>
                <MsgTool>
                  <svg width="15" height="15" viewBox="0 0 15 15">
                    <circle cx="7.5" cy="7.5" r="6.5" fill="#f4f4f4" stroke="#888" />
                    <path d="M7.5 3.5V5M7.5 6.5V11.5" stroke="#666" strokeWidth="1.4" />
                  </svg>
                </MsgTool>
                <MsgToolPlain>
                  <svg width="15" height="15" viewBox="0 0 15 15">
                    <path d="M1 2L5 8M5 2L1 8M7 3H14M7 6H14M1 10H14M1 13H14" stroke="#666" strokeWidth="1.2" />
                  </svg>
                </MsgToolPlain>
              </MsgTools>
              <DockBox />
              <DockTabs>
                <DockTab $w={71} $active>Messages</DockTab>
                <DockTab $w={72}>Progress</DockTab>
              </DockTabs>
            </Dock>
          </Docks>
        </MainArea>
      </Workspace>
      <StatusBar>
        Ready
        <StatusTools>
          {statusIcons.map((s, i) => (
            <StatusIcon key={i} $boxed={s.boxed} $gap={s.gap}>
              <Thin d={s.d} c={i === 8 ? '#1d6d98' : '#4a6a80'} />
            </StatusIcon>
          ))}
        </StatusTools>
        <StatusText $w={66}>Raster=1.000</StatusText>
        <StatusSep />
        <StatusText $w={100}>Meshcells=6,473,600</StatusText>
        <StatusSep />
        <StatusText $w={36}>Normal</StatusText>
        <StatusSep />
        <StatusText $w={73}>mm GHz ns K</StatusText>
      </StatusBar>

      <EdaWindow>
        <WinTitle>
          <CstLogo />
          <WinTitleText>F:\lizheng\program\Cadence\optic_project\CST\MWS_CUT4\Model\3D\Untitled_1.ldb - CST EDA Import</WinTitleText>
          <EdaControls>
            <EdaControl>
              <svg width="12" height="2"><rect width="12" height="1" fill="#999" /></svg>
            </EdaControl>
            <EdaControl>
              <svg width="11" height="11"><rect x=".5" y=".5" width="10" height="10" fill="none" stroke="#888" /></svg>
            </EdaControl>
            <EdaControl>
              <X c="#888" />
            </EdaControl>
          </EdaControls>
        </WinTitle>
        <MenuBar>
          <span>Import</span>
          <span>Simulation</span>
          <span>View</span>
          <span>Help</span>
        </MenuBar>
        <Toolbar>
          <Grip $w={14} />
          {tools.map((t, i) =>
            t.sep ? (
              <ToolSep key={i} $w={t.w} />
            ) : t.gap ? (
              <ToolGap key={i} $w={t.w} />
            ) : (
              <Tool key={i} $w={t.w} $active={t.active} $off={t.off}>
                <ToolIcon>{toolIcons[t.k as string]}</ToolIcon>
                {t.label?.map((l) => (
                  <span key={l}>{l}</span>
                ))}
              </Tool>
            )
          )}
          <ToolMore>»</ToolMore>
        </Toolbar>
        <EdaBody>
          <LeftCol>
            <PanelTitle $mt={3}>
              Areas
              <PanelIcons>
                <Float />
                <X s={9} c="#333" w={1.6} />
              </PanelIcons>
            </PanelTitle>
            <PanelBody>
              <CheckRow $mt={12}>
                <Box />Enable area restrictions
              </CheckRow>
              <Frame $h={185} $mt={9}>
                <Sheet $cols="100px 30px 30px 200px" $head={23}>
                  <HeadCell>Name</HeadCell>
                  <HeadCell>Neg</HeadCell>
                  <HeadCell>Autc</HeadCell>
                  <HeadCell>Layers</HeadCell>
                  <Cell>NETAREA_1</Cell>
                  <CheckCell><Box on={false} /></CheckCell>
                  <CheckCell><Box /></CheckCell>
                  <Cell>DIESTACK1_PIC2;DIESTACK1_PI...</Cell>
                </Sheet>
              </Frame>
              <CheckRow $mt={7}>
                <Box />Filter:
              </CheckRow>
              <FilterInput $cols="100px 30px 30px 200px" $h={25} $mt={2}>
                <FilterCol /><FilterCol /><FilterCol /><FilterCol />
              </FilterInput>
              <BtnRow $mt={7}>
                <Btn $w={135} $off>Edit</Btn>
                <Btn $w={135} $off $left>Sn</Btn>
              </BtnRow>
              <BtnRow $mt={9}>
                <Btn $w={135}>New rectangle</Btn>
                <Btn $w={135} $left>Ne</Btn>
              </BtnRow>
              <PanelTabs>
                <PanelTab $w={83}>Components</PanelTab>
                <PanelTab $w={50}>Nets</PanelTab>
                <PanelTab $w={50} $active>Areas</PanelTab>
              </PanelTabs>
            </PanelBody>
            <PanelTitle $mt={5}>Pins</PanelTitle>
            <PanelBody>
              <Frame $h={192} $mt={12}>
                <FrameMain>
                  <Sheet $cols={mainPinCols} $head={25}>
                    <HeadCell><SortMark>^</SortMark>Refdes</HeadCell>
                    <HeadCell>Pin</HeadCell>
                    <HeadCell>Logical</HeadCell>
                    <HeadCell>Type</HeadCell>
                    <HeadCell />
                    <HeadCell />
                    <HeadCell />
                    <HeadCell />
                    {mainPins.map((r) => (
                      <React.Fragment key={r[1]}>
                        {r.map((c, j) => (
                          <Cell key={j}>{c}</Cell>
                        ))}
                        <Cell /><Cell /><Cell /><Cell />
                      </React.Fragment>
                    ))}
                  </Sheet>
                  <VScroll>
                    <ScrollEndBottom><Chev d="d" /></ScrollEndBottom>
                  </VScroll>
                </FrameMain>
                <HScroll>
                  <HEnd><Chev d="l" /></HEnd>
                  <HThumb $w={462} />
                  <HEndRight $inset={17}><Chev d="r" /></HEndRight>
                </HScroll>
              </Frame>
              <CheckRow $mt={3}>
                <Box />Filter:
              </CheckRow>
              <FilterInput $cols="100px 60px 100px 40px 40px 100px 30px 93px 1fr" $h={24} $mt={1}>
                <FilterCol /><FilterCol /><FilterCol /><FilterCol /><FilterCol /><FilterCol /><FilterCol /><FilterCol />
              </FilterInput>
              <BtnRow $mt={8}>
                <Btn $w={120} $off>Assign phys. 3D net</Btn>
                <Btn $w={73}>Ports...</Btn>
                <CheckRowMuted>
                  <Box on={false} off />Only show pins included by the 3D model
                </CheckRowMuted>
              </BtnRow>
            </PanelBody>
          </LeftCol>
          <RightCol>
            <Canvas>
              <Pcb />
            </Canvas>
            <LowerRow>
              <LogCol>
                <LogBox>
                  <LogText>
                    {logLines.map((l, i) => (
                      <LogLine key={i}>{l}</LogLine>
                    ))}
                  </LogText>
                  <VScroll>
                    <LogThumbSpace />
                    <VThumb $h={143} />
                    <ScrollEndBottom><Chev d="d" /></ScrollEndBottom>
                  </VScroll>
                </LogBox>
                <LogTabs>
                  <LogTab $w={73} $active>Log File</LogTab>
                  <LogTab $w={59}>Report</LogTab>
                  <LogTab $w={110}>Layout Problems</LogTab>
                </LogTabs>
              </LogCol>
              <LayerPanel>
                <PanelTitle $mt={0}>
                  Layer Visibility
                  <PanelIcons>
                    <Float />
                    <X s={9} c="#333" w={1.6} />
                  </PanelIcons>
                </PanelTitle>
                <LayerMain>
                  <LayerContent>
                    <MaskRow>
                      <Box />Mask<MaskSecond /><Box on={false} />Dielectric
                    </MaskRow>
                    <LayerGrid>
                      <span />
                      {layerHeads}
                      {layerRows.map(([t, c, wide], i) => (
                        <React.Fragment key={i}>
                          <LayerLabel $color={c} $wide={wide}>{t}</LayerLabel>
                          {Array.from({ length: 9 }, (_, j) => (
                            <Box key={j} on={j !== 1} />
                          ))}
                        </React.Fragment>
                      ))}
                    </LayerGrid>
                  </LayerContent>
                  <VScroll>
                    <ScrollEnd $mt={3}><Chev d="u" /></ScrollEnd>
                    <VThumb $h={168} />
                    <ScrollEndBottom><Chev d="d" /></ScrollEndBottom>
                  </VScroll>
                </LayerMain>
              </LayerPanel>
            </LowerRow>
          </RightCol>
        </EdaBody>
        <CoordBar>
          {coords.map((c, i) => (
            <CoordCell key={i} $w={c.w} $pad={c.pad}>{c.t}</CoordCell>
          ))}
        </CoordBar>
      </EdaWindow>

      <Dialog>
        <DialogTitle>
          <CstLogo />
          <WinTitleText $dark>Port Definition - F:\lizheng\program\Cadence\optic_project\CST\MWS_CUT4\Model\3D\Untitled_1.ldb - CST EDA Import</WinTitleText>
          <EdaControls>
            <EdaControl $w={31}>
              <X c="#333" />
            </EdaControl>
          </EdaControls>
        </DialogTitle>
        <DialogBody>
          <GroupBox>
            <GroupLegend>Pins</GroupLegend>
            <Frame $h={191}>
              <FrameMain>
                <Sheet $cols={`${dlgPinCols} 1fr`} $head={25}>
                  <HeadCell><SortMark>^</SortMark>Refdes</HeadCell>
                  <HeadCell>Pin</HeadCell>
                  <HeadCell>Net</HeadCell>
                  <span />
                  {dlgPins.map((p, i) => (
                    <React.Fragment key={p}>
                      <Cell $focus={i === 0}>BGA1</Cell>
                      <Cell>{p}</Cell>
                      <Cell>GND</Cell>
                      <span />
                    </React.Fragment>
                  ))}
                </Sheet>
                <VScroll>
                  <ScrollEnd $mt={2}><Chev d="u" /></ScrollEnd>
                  <VThumb $h={18} />
                  <ScrollEndBottom><Chev d="d" /></ScrollEndBottom>
                </VScroll>
              </FrameMain>
            </Frame>
            <CheckRow $mt={3}>
              <Box />Filter:
            </CheckRow>
            <FilterInput $cols={`${dlgPinCols} 1fr`} $h={24} $mt={2}>
              <FilterCol /><FilterCol /><FilterCol />
            </FilterInput>
            <CheckRow $mt={8}><Box />Only show pins of selected nets</CheckRow>
            <CheckRow $mt={8}><Box />Show power pins</CheckRow>
            <CheckRow $mt={8}><Box />Show ground pins</CheckRow>
          </GroupBox>
          <MiddleCol>
            <Btn>Add ports</Btn>
            <Btn>Add 2-pin port</Btn>
            <Btn>Add ref. pins</Btn>
            <RemoveSlot><Btn>Remove</Btn></RemoveSlot>
          </MiddleCol>
          <TabCol>
            <PageTab>Discrete ports</PageTab>
            <TabPage>
              <Frame $h={208}>
                <FrameMain>
                  <Sheet $cols={portCols} $head={25}>
                    {portHead.map((h, i) => (
                      <HeadCell key={h}>
                        {i === 0 && <SortMark>^</SortMark>}
                        {h}
                      </HeadCell>
                    ))}
                    {ports.map((r, i) => (
                      <React.Fragment key={i}>
                        {r.map((c, j) => (
                          <Cell key={j}>{c}</Cell>
                        ))}
                      </React.Fragment>
                    ))}
                  </Sheet>
                </FrameMain>
                <HScroll>
                  <HEnd><Chev d="l" /></HEnd>
                  <HThumb $w={308} />
                  <HEndRight><Chev d="r" /></HEndRight>
                </HScroll>
              </Frame>
              <FormGrid>
                <FormLabel>Template for labels:</FormLabel>
                <FormInput>{'{refdes}_{pin}'}</FormInput>
                <ApplyCell><Btn>Apply to selected</Btn></ApplyCell>
                <FormLabel>Template for labels: (2-pin port)</FormLabel>
                <FormInput>{'{refdes}_{pin1}_{pin2}'}</FormInput>
                <FormLabelLast>Auto port numbering starts with:</FormLabelLast>
                <FormInputLast>1</FormInputLast>
                <Btn>Fix port numbers</Btn>
              </FormGrid>
            </TabPage>
          </TabCol>
          <ActionCol>
            <Btn>OK</Btn>
            <Btn>Cancel</Btn>
            <Btn>Help</Btn>
          </ActionCol>
        </DialogBody>
      </Dialog>
    </Desktop>
  );
}
